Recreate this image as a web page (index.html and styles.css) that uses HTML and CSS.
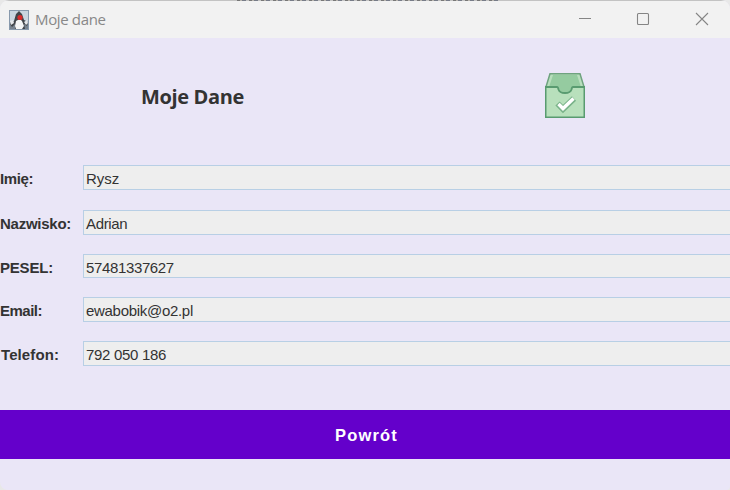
FILE: index.html
```html
<!DOCTYPE html>
<html lang="pl">
<head>
<meta charset="utf-8">
<title>Moje dane</title>
<link rel="stylesheet" href="styles.css">
</head>
<body>
<div class="window">
  <header class="titlebar">
    <svg class="app-icon" viewBox="0 0 20 20">
      <rect x=".5" y=".5" width="19" height="19" fill="#c9d5df" stroke="#8799ac"/>
      <path d="M1 12h18v7H1z" fill="#77838f"/>
      <path d="M10 1 7 4 5 11l-4 3 2 3 3-3v5h10l-1-5 3 2 1-4-4-2-2-6z" fill="#404449"/>
      <path d="M7 11q4-3 6 0l2 5-2 3H7l-1-3z" fill="#f5f6f6"/>
      <path d="M1 11l3-1 1 3-3 2zM15 12l3-2 1 3-2 2z" fill="#e5e8eb"/>
      <circle cx="11" cy="7.5" r="2.6" fill="#d92b2b"/>
    </svg>
    <span class="caption">Moje dane</span>
    <svg class="controls" viewBox="0 0 134 16" fill="none" stroke="#858585" stroke-width="1.1">
      <path d="M1 6.500h12"/>
      <rect x="59.5" y="1.5" width="11" height="11" rx="1"/>
      <path d="M118 1l12 12M130 1l-12 12"/>
    </svg>
    <i class="backdrop-edge"></i>
  </header>
  <main>
    <div class="heading">
      <h1>Moje Dane</h1>
      <svg class="box-icon" viewBox="0 0 40 45">
        <path d="M5 .75h30l4 13H1z" fill="#b8debd" stroke="#6fa37f" stroke-width="1.5"/>
        <path d="M8 2h24l4 12H4z" fill="#95cba0"/>
        <path d="M1 14h38v30H1z" fill="#b8e0bc"/>
        <path d="M11 13h18v1h-1q-1 0-1.500 2.500Q25.500 20 20 20t-6.500-3.500Q13 14 12 14h-1z" fill="#95cba0"/>
        <path d="M1 14h11q1 0 1.500 2.500Q14.500 20 20 20t6.500-3.500Q27 14 28 14h11" fill="none" stroke="#599b70" stroke-width="1.800"/>
        <path d="M.75 13v31.250h38.500V13" fill="none" stroke="#599b70" stroke-width="1.500"/>
        <path d="M12.500 30.500l5.500 5.500L29 25.500" fill="none" stroke="#7ab38a" stroke-width="6"/>
        <path d="M13.500 31l4.500 4.500L28.500 25.500" fill="none" stroke="#fff" stroke-width="3.400"/>
      </svg>
    </div>
    <div class="form">
      <div class="row"><span class="label first">Imię:</span><span class="field rysz">Rysz</span></div>
      <div class="row"><span class="label nazwisko">Nazwisko:</span><span class="field adrian">Adrian</span></div>
      <div class="row"><span class="label pesel">PESEL:</span><span class="field number">57481337627</span></div>
      <div class="row"><span class="label email">Email:</span><span class="field address">ewabobik@o2.pl</span></div>
      <div class="row"><span class="label telefon">Telefon:</span><span class="field phone">792 050 186</span></div>
    </div>
    <button class="back">Powrót</button>
  </main>
</div>
</body>
</html>
```

FILE: styles.css
```css
* { box-sizing: border-box; }
body { margin: 0; background: #e8e8e8; font-family: "Liberation Sans", Arial, sans-serif; overflow: hidden; }
.window {
  position: relative;
  width: 730px; height: 490px; overflow: hidden;
  border-radius: 9px 9px 4px 8px;
  background: #eae6f7; color: #333;
}
.titlebar {
  height: 38px; padding: 0 20px 0 9px; display: flex; align-items: center;
  background: #f2f2f2; border-top: 1px solid #c3c3c3;
}
.backdrop-edge {
  position: absolute; left: 237px; top: 0; width: 261px; height: 1px;
  background: repeating-linear-gradient(90deg, #777 0 3px, #b8b4ae 3px 5px, #777c88 5px 9px, #c3c3c3 9px 12px);
}
.app-icon { width: 20px; height: 20px; }
.caption {
  margin: -2px auto 0 6px; color: #888;
  font: 15px/20px "Open Sans", sans-serif; letter-spacing: -.35px;
}
.controls { width: 134px; height: 16px; margin-right: -2px; }
.heading { height: 127px; display: flex; align-items: flex-start; }
h1 {
  width: 404px; margin: 45px 0 0 141px;
  font: bold 20px/28px "Open Sans", sans-serif; letter-spacing: -.35px;
}
.box-icon { width: 40px; height: 45px; margin-top: 35px; }
.form { display: flex; flex-direction: column; height: 245px; }
.row { display: grid; grid-template: 100% / 83px 1fr; height: 25px; margin-bottom: 19px; }
.row:first-child { margin-bottom: 20px; }
.row:nth-child(3) { height: 24px; }
.label { font-size: 15px; font-weight: bold; line-height: 27px; white-space: nowrap; }
.first { letter-spacing: -.4px; }
.nazwisko { letter-spacing: -.25px; }
.pesel { letter-spacing: -.2px; }
.email { letter-spacing: -.5px; }
.telefon { padding-left: 1px; letter-spacing: .1px; }
.field {
  padding-left: 2px; background: #eee;
  border: 1px solid #b8cfe5; border-right: 0;
  font-size: 15px; line-height: 25px; height: 100%; white-space: nowrap;
}
.adrian { letter-spacing: -.35px; }
.number { letter-spacing: -.36px; }
.address { letter-spacing: -.3px; }
.phone { letter-spacing: -.3px; }
.back {
  display: block; width: 100%; height: 49px; padding: 1px 0 0 3px;
  border: 0; background: #6400cb; color: #fff;
  font: bold 16.500px/24px "Liberation Sans", Arial, sans-serif; letter-spacing: 1.150px;
}
```
